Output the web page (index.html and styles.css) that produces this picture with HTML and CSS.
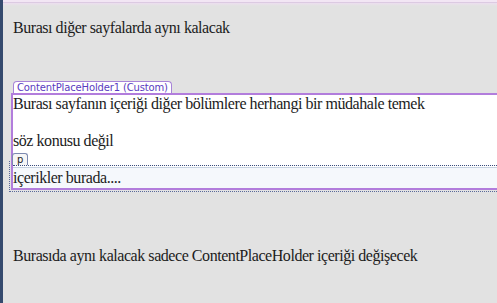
FILE: index.html
```html
<!DOCTYPE html>
<html>
    <head>
        <meta charset="utf-8">
        <title>Master Page</title>
        <link rel="stylesheet" href="styles.css">
    </head>
    <body>
        <div class="page">
            <p class="static">Burası diğer sayfalarda aynı kalacak</p>

            <div class="cph">
                <span class="cph-tab">ContentPlaceHolder1 (Custom)</span>
                <div class="cph-body">
                    <p class="para">Burası sayfanın içeriği diğer bölümlere herhangi bir müdahale temek<br><br>söz konusu değil</p>
                    <span class="tag">p</span>
                    <div class="row">içerikler burada....</div>
                </div>
            </div>

            <p class="static bottom">Burasıda aynı kalacak sadece ContentPlaceHolder içeriği değişecek</p>
        </div>
    </body>
</html>
```

FILE: styles.css
```css
html, body {
    margin: 0;
    height: 100%;
}

body {
    background: #e2e2e2;
    color: #1c1c1c;
    overflow: hidden;
}

.page {
    min-height: 100%;
    border-left: 3px solid #354a6e;
    box-sizing: border-box;
    background: linear-gradient(#f2e6f4 0, #f2e6f4 2px, #dccae2 2px, #dccae2 3px, #ecdeef 3px, #e6e2e6 5px, #e2e2e2 6px);
    padding-top: 19px;
}

/* Times-like body copy, squeezed a bit to match the narrower hinted widths */
.static,
.para,
.row {
    font-family: "Liberation Serif", serif;
    font-size: 16px;
    letter-spacing: -0.45px;
}

.static {
    margin: 0;
    padding-left: 10px;
    line-height: 18px;
}

.cph {
    margin-top: 44px;
}

.cph-tab {
    display: block;
    width: fit-content;
    height: 11px;
    margin-left: 10px;
    padding: 0 3px;
    font-family: "DejaVu Sans", sans-serif;
    font-size: 10px;
    line-height: 11px;
    letter-spacing: -0.15px;
    color: #5a3cc0;
    background: #fff;
    border: 1px solid #a783d8;
    border-bottom: 0;
    border-radius: 4px 4px 0 0;
}

.cph-body {
    margin-left: 8px;
    background: #fff;
    border: 2px solid #b27ddc;
    border-right: 0;
    position: relative;
}

.cph-body::after {
    content: "";
    position: absolute;
    left: -4px;
    right: 0;
    top: 66px;
    bottom: -4px;
    border-left: 1px dotted #5a6a9a;
    border-bottom: 1px dotted #5a6a9a;
    pointer-events: none;
}

.para {
    margin: 0;
    line-height: 18.5px;
}

.tag {
    display: block;
    width: fit-content;
    height: 11px;
    margin: 2px 0 0 -1px;
    padding: 0 4px;
    font-family: "DejaVu Sans", sans-serif;
    font-size: 10px;
    line-height: 11px;
    color: #222;
    background: #f6f6f6;
    border: 1px solid #7d8ab0;
    border-bottom: 0;
    border-radius: 3px 3px 0 0;
}

.row {
    border-top: 1px dotted #3c4c7c;
    box-shadow: inset 0 1px 0 #fff, inset 0 2px 0 #c6d2e0;
    background: #f5f8fc;
    padding: 3px 0 1px;
    line-height: 18px;
}

.bottom {
    margin-top: 57px;
}
```
